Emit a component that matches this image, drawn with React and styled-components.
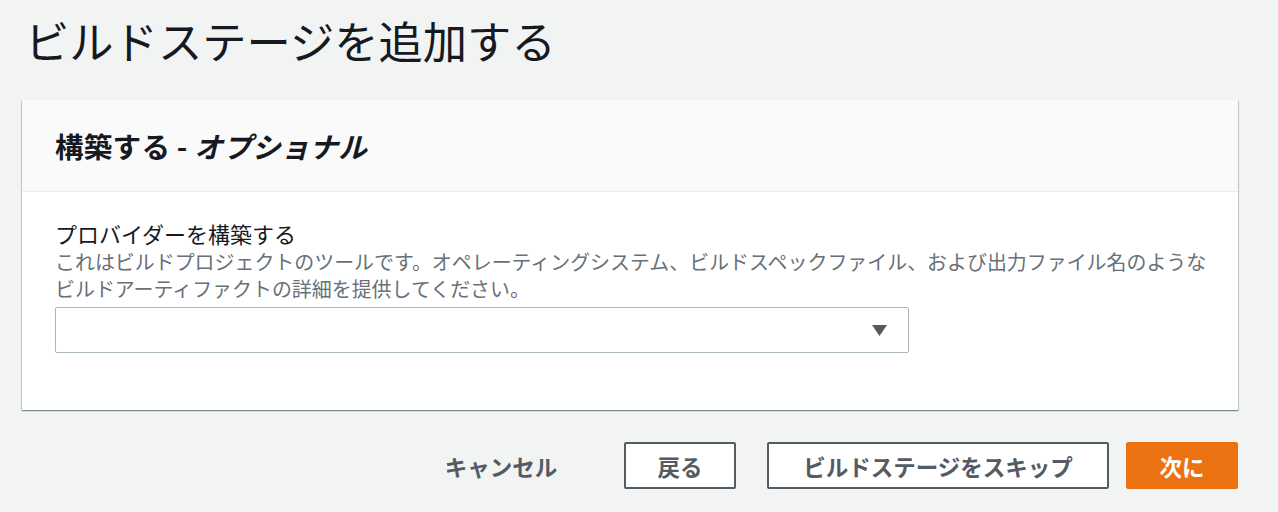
import React from "react";
import styled, { createGlobalStyle } from "styled-components";

const Global = createGlobalStyle`
  html, body { margin: 0; padding: 0; background: #f2f3f3; }
  body { font-family: "Noto Sans CJK JP", "Noto Sans", sans-serif; color: #16191f; }
`;

const Page = styled.div`
  padding: 14px 40px 0 22px;
  display: flex;
  flex-direction: column;
`;

const Title = styled.h1`
  margin: 0 0 34px 3px;
  font-size: 44.3px;
  line-height: 52px;
  font-weight: 400;
  color: #16191f;
`;

const Card = styled.section`
  background: #fff;
  box-shadow: 0 1px 1px 0 rgba(0, 28, 36, 0.3), 1px 1px 1px 0 rgba(0, 28, 36, 0.15),
    -1px 1px 1px 0 rgba(0, 28, 36, 0.15);
`;

const CardHeader = styled.div`
  height: 91px;
  background: #fafafa;
  border-bottom: 1px solid #eaeded;
  display: flex;
  align-items: center;
  padding: 0 33px;
`;

const CardTitle = styled.h2`
  margin: 0;
  font-size: 28.6px;
  font-weight: 700;
  color: #16191f;
  letter-spacing: 0.2px;
`;

const Opt = styled.i`
  font-style: italic;
`;

const CardBody = styled.div`
  padding: 27px 33px 57px;
`;

const Label = styled.div`
  font-size: 22px;
  line-height: 28px;
  color: #16191f;
`;

const Desc = styled.div`
  font-size: 19.95px;
  line-height: 27px;
  color: #687078;
  margin-top: 1px;
  white-space: nowrap;
`;

const Select = styled.div`
  margin-top: 5px;
  width: 854px;
  height: 46px;
  box-sizing: border-box;
  border: 1px solid #aab7b8;
  border-radius: 2px;
  background: #fff;
  display: flex;
  align-items: center;
  justify-content: flex-end;
  padding-right: 21px;
`;

const Footer = styled.div`
  margin-top: 32px;
  display: flex;
  justify-content: flex-end;
  align-items: center;
`;

const Button = styled.button`
  box-sizing: border-box;
  height: 47px;
  width: ${(p) => p.$w}px;
  margin-left: ${(p) => p.$ml}px;
  font-family: "Noto Sans CJK JP", "Noto Sans", sans-serif;
  font-size: 22.5px;
  font-weight: 700;
  border-radius: 2px;
  display: flex;
  align-items: center;
  justify-content: center;
  padding: 0;
  cursor: pointer;
  color: ${(p) => (p.$primary ? "#fff" : "#545b64")};
  background: ${(p) => (p.$primary ? "#ec7211" : p.$link ? "transparent" : "#fff")};
  border: ${(p) =>
    p.$primary ? "1px solid #ec7211" : p.$link ? "none" : "2px solid #545b64"};
`;

export default function App() {
  return (
    <>
      <Global />
      <Page>
        <Title>ビルドステージを追加する</Title>
        <Card>
          <CardHeader>
            <CardTitle>
              構築する - <Opt>オプショナル</Opt>
            </CardTitle>
          </CardHeader>
          <CardBody>
            <Label>プロバイダーを構築する</Label>
            <Desc>
              これはビルドプロジェクトのツールです。オペレーティングシステム、ビルドスペックファイル、および出力ファイル名のような
              <br />
              ビルドアーティファクトの詳細を提供してください。
            </Desc>
            <Select>
              <svg width="15" height="11" viewBox="0 0 15 11">
                <path d="M0 0 H15 L7.5 11 Z" fill="#545b64" />
              </svg>
            </Select>
          </CardBody>
        </Card>
        <Footer>
          <Button $link $w={136} $ml={0}>キャンセル</Button>
          <Button $w={112} $ml={55}>戻る</Button>
          <Button $w={342} $ml={31}>ビルドステージをスキップ</Button>
          <Button $primary $w={112} $ml={17}>次に</Button>
        </Footer>
      </Page>
    </>
  );
}
